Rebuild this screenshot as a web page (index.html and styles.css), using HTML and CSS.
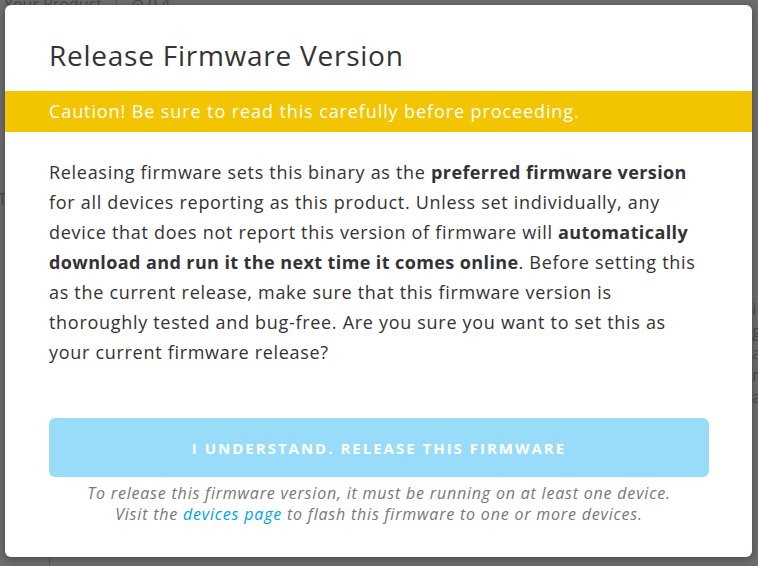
FILE: index.html
```html
<!DOCTYPE html>
<html>
<head>
<meta charset="utf-8">
<link rel="stylesheet" href="styles.css">
</head>
<body>
<div class="page">
  <div class="topbar"><span class="prod">Your Product</span><span class="sep"></span><span class="ver">⊙ 0.4</span></div>
  <div class="bg-left">T</div>
  <div class="bg-right">
    <span>i</span><span>g</span><span>a</span><span>n</span><span>a</span>
  </div>
  <div class="bg-line"></div>
</div>
<div class="overlay">
  <div class="modal">
    <h1 class="title">Release Firmware Version</h1>
    <div class="caution">Caution! Be sure to read this carefully before proceeding.</div>
    <p class="body">Releasing firmware sets this binary as the <b>preferred firmware version</b> for all devices reporting as this product. Unless set individually, any device that does not report this version of firmware will <b>automatically download and run it the next time it comes online</b>. Before setting this as the current release, make sure that this firmware version is thoroughly tested and bug-free. Are you sure you want to set this as your current firmware release?</p>
    <div class="actions">
      <button class="release">I UNDERSTAND. RELEASE THIS FIRMWARE</button>
      <p class="note">To release this firmware version, it must be running on at least one device.<br>Visit the <a href="#">devices page</a> to flash this firmware to one or more devices.</p>
    </div>
  </div>
</div>
</body>
</html>
```
FILE: styles.css
```css
html, body { margin: 0; padding: 0; }
body {
  width: 758px; height: 566px; overflow: hidden; position: relative;
  background: #6d6d6d;
  font-family: "Open Sans", "Liberation Sans", sans-serif;
}
.page { color: #555; font-size: 16px; }
.topbar { display: flex; align-items: center; gap: 14px; padding: 0 0 0 4px; height: 20px; margin-top: -6px; color: #4a4a4a; }
.sep { width: 1px; height: 22px; background: #5a5a5a; }
.bg-left { position: absolute; left: -2px; top: 188px; color: #4a4a4a; }
.bg-right { position: absolute; right: -4px; top: 298px; display: flex; flex-direction: column; color: #4a4a4a; }
.bg-line { position: absolute; left: 49px; top: 556px; width: 1px; height: 10px; background: #555; }

.overlay { position: absolute; inset: 0; }
.modal {
  position: absolute; left: 5px; top: 5px; width: 747px; height: 552px;
  background: #fff; border-radius: 6px;
  box-shadow: 0 2px 8px rgba(0,0,0,0.35);
  box-sizing: border-box;
}
.title {
  margin: 0; padding: 32px 44px 0; height: 54px;
  font-weight: 400; font-size: 28px; color: #333; line-height: 36px; letter-spacing: 0.75px;
}
.caution {
  background: #f2c500; color: #fff; font-size: 18px; letter-spacing: 0.9px;
  height: 41px; line-height: 41px; padding: 0 44px;
}
.body {
  margin: 0; padding: 25px 52px 0 44px; font-size: 18px; line-height: 30px; color: #333; letter-spacing: 0.7px;
}
.body b { font-weight: 700; letter-spacing: 0.4px; }
.actions { padding: 51px 43px 0 44px; }
.release {
  display: block; width: 100%; height: 59px; border: 0; border-radius: 6px;
  background: #98dcfa; color: #fff; font-family: inherit; font-weight: 700;
  font-size: 15px; letter-spacing: 2px;
}
.note {
  margin: 6px 0 0; text-align: center; font-style: italic; font-size: 16px; line-height: 21px; color: #777; letter-spacing: 0.8px;
}
.note a { color: #00a3e6; text-decoration: none; }
```
